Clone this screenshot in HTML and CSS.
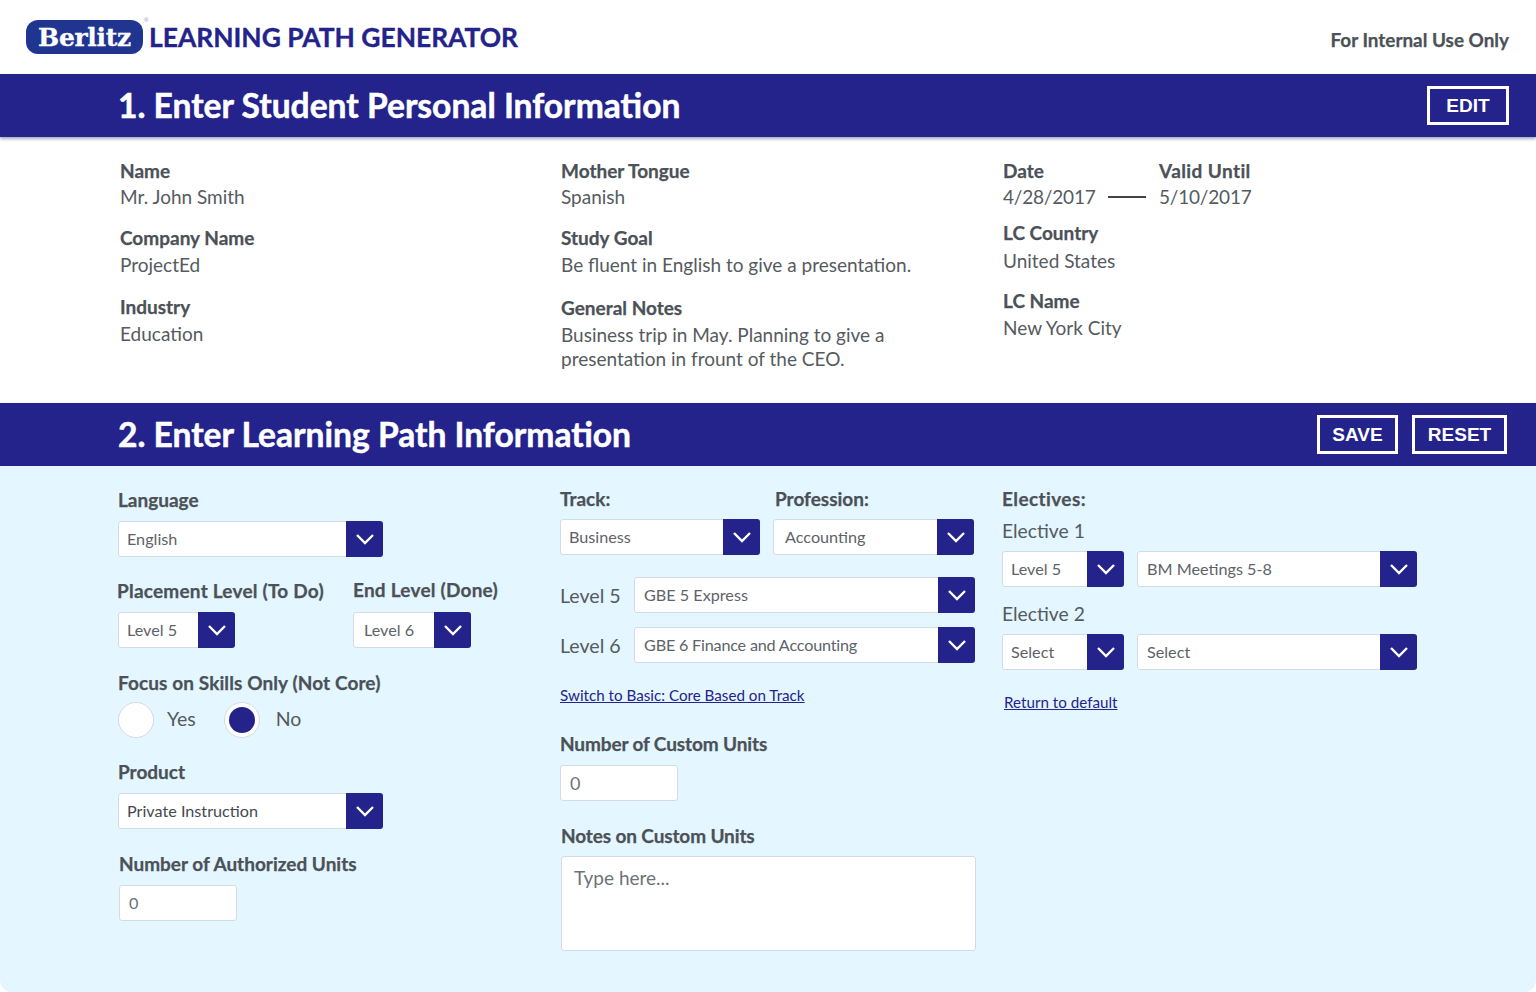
FILE: index.html
```html
<!DOCTYPE html>
<html lang="en">
<head>
<meta charset="utf-8">
<title>Learning Path Generator</title>
<link rel="stylesheet" href="styles.css">
</head>
<body>
<header class="top">
  <div class="brand">
    <span class="logo">Berlitz<sup class="reg">®</sup></span>
    <span class="product-name">LEARNING PATH GENERATOR</span>
  </div>
  <span class="internal">For Internal Use Only</span>
</header>

<section class="bar">
  <h1>1. Enter Student Personal Information</h1>
  <div class="actions"><button class="btn btn-edit">EDIT</button></div>
</section>
<section class="info">
  <div class="info-col">
    <div class="fact fact-top"><b>Name</b><span>Mr. John Smith</span></div>
    <div class="fact"><b>Company Name</b><span>ProjectEd</span></div>
    <div class="fact"><b>Industry</b><span>Education</span></div>
  </div>
  <div class="info-col">
    <div class="fact fact-top"><b>Mother Tongue</b><span>Spanish</span></div>
    <div class="fact fact-goal"><b>Study Goal</b><span>Be fluent in English to give a presentation.</span></div>
    <div class="fact"><b>General Notes</b><span>Business trip in May. Planning to give a<br>presentation in frount of the CEO.</span></div>
  </div>
  <div class="info-col info-col-tight">
    <div class="dates">
      <div class="fact fact-top fact-date"><b>Date</b><span>4/28/2017</span></div>
      <i class="dash"></i>
      <div class="fact fact-top fact-valid"><b>Valid Until</b><span>5/10/2017</span></div>
    </div>
    <div class="fact fact-country"><b>LC Country</b><span>United States</span></div>
    <div class="fact"><b>LC Name</b><span>New York City</span></div>
  </div>
</section>

<section class="bar">
  <h1>2. Enter Learning Path Information</h1>
  <div class="actions"><button class="btn btn-save">SAVE</button><button class="btn btn-reset">RESET</button></div>
</section>
<section class="form">
  <div class="form-col col-a">
    <h2 class="l-language">Language</h2>
    <div class="select w-265"><span>English</span><i class="caret"><svg viewBox="0 0 20 12"><path d="M2 2l8 8 8-8"/></svg></i></div>
    <div class="pair">
      <div class="pair-a">
        <h2 class="l-placement">Placement Level (To Do)</h2>
        <div class="select w-117"><span>Level 5</span><i class="caret"><svg viewBox="0 0 20 12"><path d="M2 2l8 8 8-8"/></svg></i></div>
      </div>
      <div class="pair-b">
        <h2 class="l-end">End Level (Done)</h2>
        <div class="select w-118"><span class="pad-11">Level 6</span><i class="caret"><svg viewBox="0 0 20 12"><path d="M2 2l8 8 8-8"/></svg></i></div>
      </div>
    </div>
    <h2 class="l-focus">Focus on Skills Only (Not Core)</h2>
    <div class="radios">
      <i class="radio"></i><span class="radio-yes">Yes</span>
      <i class="radio radio-on"></i><span class="radio-no">No</span>
    </div>
    <h2 class="l-product">Product</h2>
    <div class="select w-265"><span class="dark">Private Instruction</span><i class="caret"><svg viewBox="0 0 20 12"><path d="M2 2l8 8 8-8"/></svg></i></div>
    <h2 class="l-auth">Number of Authorized Units</h2>
    <div class="input w-118 auth-input">0</div>
  </div>

  <div class="form-col col-b">
    <div class="track-row">
      <div>
        <h2 class="l-track">Track:</h2>
        <div class="select w-200"><span>Business</span><i class="caret"><svg viewBox="0 0 20 12"><path d="M2 2l8 8 8-8"/></svg></i></div>
      </div>
      <div>
        <h2 class="l-track l-profession">Profession:</h2>
        <div class="select w-201"><span class="pad-12">Accounting</span><i class="caret"><svg viewBox="0 0 20 12"><path d="M2 2l8 8 8-8"/></svg></i></div>
      </div>
    </div>
    <div class="level-row first">
      <span class="level-name">Level 5</span>
      <div class="select"><span>GBE 5 Express</span><i class="caret"><svg viewBox="0 0 20 12"><path d="M2 2l8 8 8-8"/></svg></i></div>
    </div>
    <div class="level-row">
      <span class="level-name">Level 6</span>
      <div class="select"><span class="squeeze">GBE 6 Finance and Accounting</span><i class="caret"><svg viewBox="0 0 20 12"><path d="M2 2l8 8 8-8"/></svg></i></div>
    </div>
    <a class="link link-switch" href="#">Switch to Basic: Core Based on Track</a>
    <h2 class="l-custom">Number of Custom Units</h2>
    <div class="input w-118 custom-input">0</div>
    <h2 class="l-notes">Notes on Custom Units</h2>
    <div class="textarea">Type here...</div>
  </div>

  <div class="form-col col-c">
    <h2 class="l-electives">Electives:</h2>
    <div class="elective-name first">Elective 1</div>
    <div class="elective-row">
      <div class="select w-122"><span>Level 5</span><i class="caret"><svg viewBox="0 0 20 12"><path d="M2 2l8 8 8-8"/></svg></i></div>
      <div class="select w-280"><span>BM Meetings 5-8</span><i class="caret"><svg viewBox="0 0 20 12"><path d="M2 2l8 8 8-8"/></svg></i></div>
    </div>
    <div class="elective-name second">Elective 2</div>
    <div class="elective-row">
      <div class="select w-122"><span>Select</span><i class="caret"><svg viewBox="0 0 20 12"><path d="M2 2l8 8 8-8"/></svg></i></div>
      <div class="select w-280"><span>Select</span><i class="caret"><svg viewBox="0 0 20 12"><path d="M2 2l8 8 8-8"/></svg></i></div>
    </div>
    <a class="link link-default" href="#">Return to default</a>
  </div>
</section>
</body>
</html>
```
FILE: styles.css
```css
* { box-sizing: border-box; }
html, body { margin: 0; padding: 0; }
body {
  width: 1536px;
  height: 992px;
  overflow: hidden;
  background: #fff;
  font-family: Lato, "Open Sans", sans-serif;
  color: #555b60;
}
h1, h2 { margin: 0; }

.top {
  height: 74px;
  display: flex;
  align-items: center;
  justify-content: space-between;
  padding: 0 27px 2px 26px;
}
.brand { display: flex; align-items: center; gap: 6px; }
.logo {
  position: relative;
  width: 117px;
  height: 34px;
  margin-top: 1px;
  background: #1f3590;
  border-radius: 12px;
  color: #fff;
  font: 700 25px/35px "DejaVu Serif", serif;
  text-align: center;
  letter-spacing: -.3px;
  -webkit-text-stroke: .3px #fff;
}
.reg {
  position: absolute;
  top: -4px;
  right: -5px;
  font: 400 6px/8px "Liberation Sans", sans-serif;
  color: #8a93b8;
  -webkit-text-stroke: 0;
}
.product-name {
  font-size: 26.4px;
  font-weight: 700;
  color: #23238b;
  margin-top: 2px;
  -webkit-text-stroke: .35px #23238b;
}
.internal {
  font-size: 18.9px;
  font-weight: 700;
  color: #4b5157;
  margin-top: 6px;
  -webkit-text-stroke: .25px #4b5157;
}

.bar {
  height: 63px;
  background: #23238b;
  box-shadow: 0 2px 3px rgba(60, 60, 110, .45);
  display: flex;
  align-items: center;
  justify-content: space-between;
  padding: 0 28px 0 118px;
  position: relative;
}
.bar h1 {
  font-size: 33.6px;
  font-weight: 700;
  color: #fff;
  margin-bottom: 2px;
  -webkit-text-stroke: .5px #fff;
}
.actions { display: flex; gap: 14px; }
.btn {
  height: 39px;
  background: transparent;
  border: 3px solid #fff;
  color: #fff;
  font: 700 19px/1 "Liberation Sans", sans-serif;
  padding: 0;
}
.btn-edit { width: 82px; margin-right: -1px; }
.btn-save { width: 81px; }
.btn-reset { width: 95px; margin-right: 1px; }

.info {
  height: 266px;
  display: grid;
  grid-template-columns: 441px 442px 1fr;
  padding: 22px 0 0 120px;
}
.fact { display: flex; flex-direction: column; margin-bottom: 18px; }
.fact b {
  font-size: 19px;
  line-height: 24px;
  font-weight: 700;
  color: #4b5157;
  -webkit-text-stroke: .25px #4b5157;
}
.fact span { font-size: 19px; line-height: 24px; margin-top: 3px; white-space: nowrap; }
.fact-top { margin-bottom: 17px; }
.fact-top span { margin-top: 2px; }
.fact-goal { margin-bottom: 19px; }
.dates { display: flex; align-items: flex-start; }
.dates .fact-top { margin-bottom: 12px; }
.fact-date { width: 105px; }
.fact-date span, .fact-valid span { letter-spacing: -.2px; }
.fact-valid b { letter-spacing: .4px; }
.dash { width: 38px; height: 2px; background: #444; margin: 37px 13px 0 0; }
.fact-country { margin-bottom: 16px; }
.fact-country span { margin-top: 4px; }

.form {
  height: 526px;
  background: #e4f6ff;
  border-radius: 0 0 12px 12px;
  display: grid;
  grid-template-columns: 442px 442px 1fr;
  padding: 0 0 0 118px;
  position: relative;
}
.form-col h2 {
  font-size: 19px;
  line-height: 24px;
  font-weight: 700;
  color: #4b5157;
  white-space: nowrap;
  -webkit-text-stroke: .25px #4b5157;
}

.select {
  display: flex;
  height: 36px;
  background: #fff;
  border: 1px solid #d6dbe3;
  border-radius: 3px;
  align-items: center;
  justify-content: space-between;
  font-size: 16.2px;
  color: #5d6368;
}
.select span { padding-left: 8px; margin-top: -2px; white-space: nowrap; }
.select .dark { color: #45494d; }
.select .pad-11 { padding-left: 10px; }
.select .pad-12 { padding-left: 11px; }
.level-row .select span, .w-280 span { padding-left: 9px; }
.select .squeeze { letter-spacing: -.2px; }
.caret {
  width: 37px;
  height: 36px;
  margin: -1px -1px -1px 0 !important;
  padding: 0 !important;
  background: #23238b;
  border-radius: 0 3px 3px 0;
  display: flex;
  align-items: center;
  justify-content: center;
}
.caret svg { width: 20px; height: 12px; fill: none; stroke: #fff; stroke-width: 2.4; }
.w-265 { width: 265px; }
.w-117 { width: 117px; }
.w-118 { width: 118px; }
.w-200 { width: 200px; }
.w-201 { width: 201px; }
.w-122 { width: 122px; }
.w-280 { width: 280px; }

.input, .textarea {
  background: #fff;
  border: 1px solid #d6dbe3;
  border-radius: 3px;
  color: #6d7378;
}
.input { height: 36px; line-height: 34px; padding-left: 9px; font-size: 16.2px; }

.l-language { margin-top: 22px; margin-bottom: 9px; }
.pair { display: flex; margin-top: 22px; }
.pair-a { width: 236px; margin-left: -1px; }
.pair-a .select { margin-left: 1px; }
.pair-a h2 { margin-bottom: 9px; }
.pair-b h2 { margin-bottom: 10px; margin-top: -1px; }
.form-col .l-placement, .form-col .l-end { letter-spacing: .22px; }
.form-col .l-focus { letter-spacing: .1px; margin-top: 23px; margin-bottom: 7px; }
.radios { display: flex; align-items: center; height: 36px; font-size: 19.5px; }
.radios span { margin-bottom: 3px; }
.radio {
  width: 36px; height: 36px;
  border-radius: 50%;
  background: #fff;
  border: 1px solid #d6dbe3;
  margin-right: 13px;
  position: relative;
}
.radio-yes { margin-right: 28px; }
.radio-on { margin-right: 16px; }
.radio-on::after {
  content: "";
  position: absolute;
  inset: 4px;
  border-radius: 50%;
  background: #23238b;
}
.l-product { margin-top: 22px; margin-bottom: 9px; }
.l-auth { margin-top: 23px; margin-bottom: 9px; margin-left: 1px; }
.auth-input { margin-left: 1px; }

.track-row { display: flex; gap: 13px; margin-top: 21px; }
.track-row > div:first-child { width: 200px; }
.l-track { margin-bottom: 8px; }
.l-profession { margin-left: 2px; }
.level-row { display: flex; align-items: center; margin-top: 14px; }
.level-row.first { margin-top: 22px; }
.level-row .select { margin-left: 14px; width: 341px; flex: none; }
.level-name { font-size: 19.6px; width: 60px; white-space: nowrap; }
.link { font-size: 15.2px; line-height: 18px; color: #23238b; text-decoration: underline; display: block; white-space: nowrap; }
.link-switch { margin-top: 23px; }
.form-col .l-custom { margin-top: 28px; margin-bottom: 9px; letter-spacing: -.12px; }
.custom-input { font-size: 18px; padding-left: 9px; }
.form-col .l-notes { margin-top: 23px; margin-bottom: 8px; margin-left: 1px; letter-spacing: -.12px; }
.textarea { width: 415px; height: 95px; margin-left: 1px; padding: 9px 12px; font-size: 19px; }

.form-col .l-electives { margin-top: 21px; letter-spacing: .4px; }
.elective-name { font-size: 19.3px; line-height: 24px; }
.elective-name.first { margin-top: 8px; margin-bottom: 8px; }
.elective-name.second { margin-top: 15px; margin-bottom: 8px; }
.elective-row { display: flex; gap: 13px; }
.link-default { margin-top: 23px; margin-left: 2px; }
```
